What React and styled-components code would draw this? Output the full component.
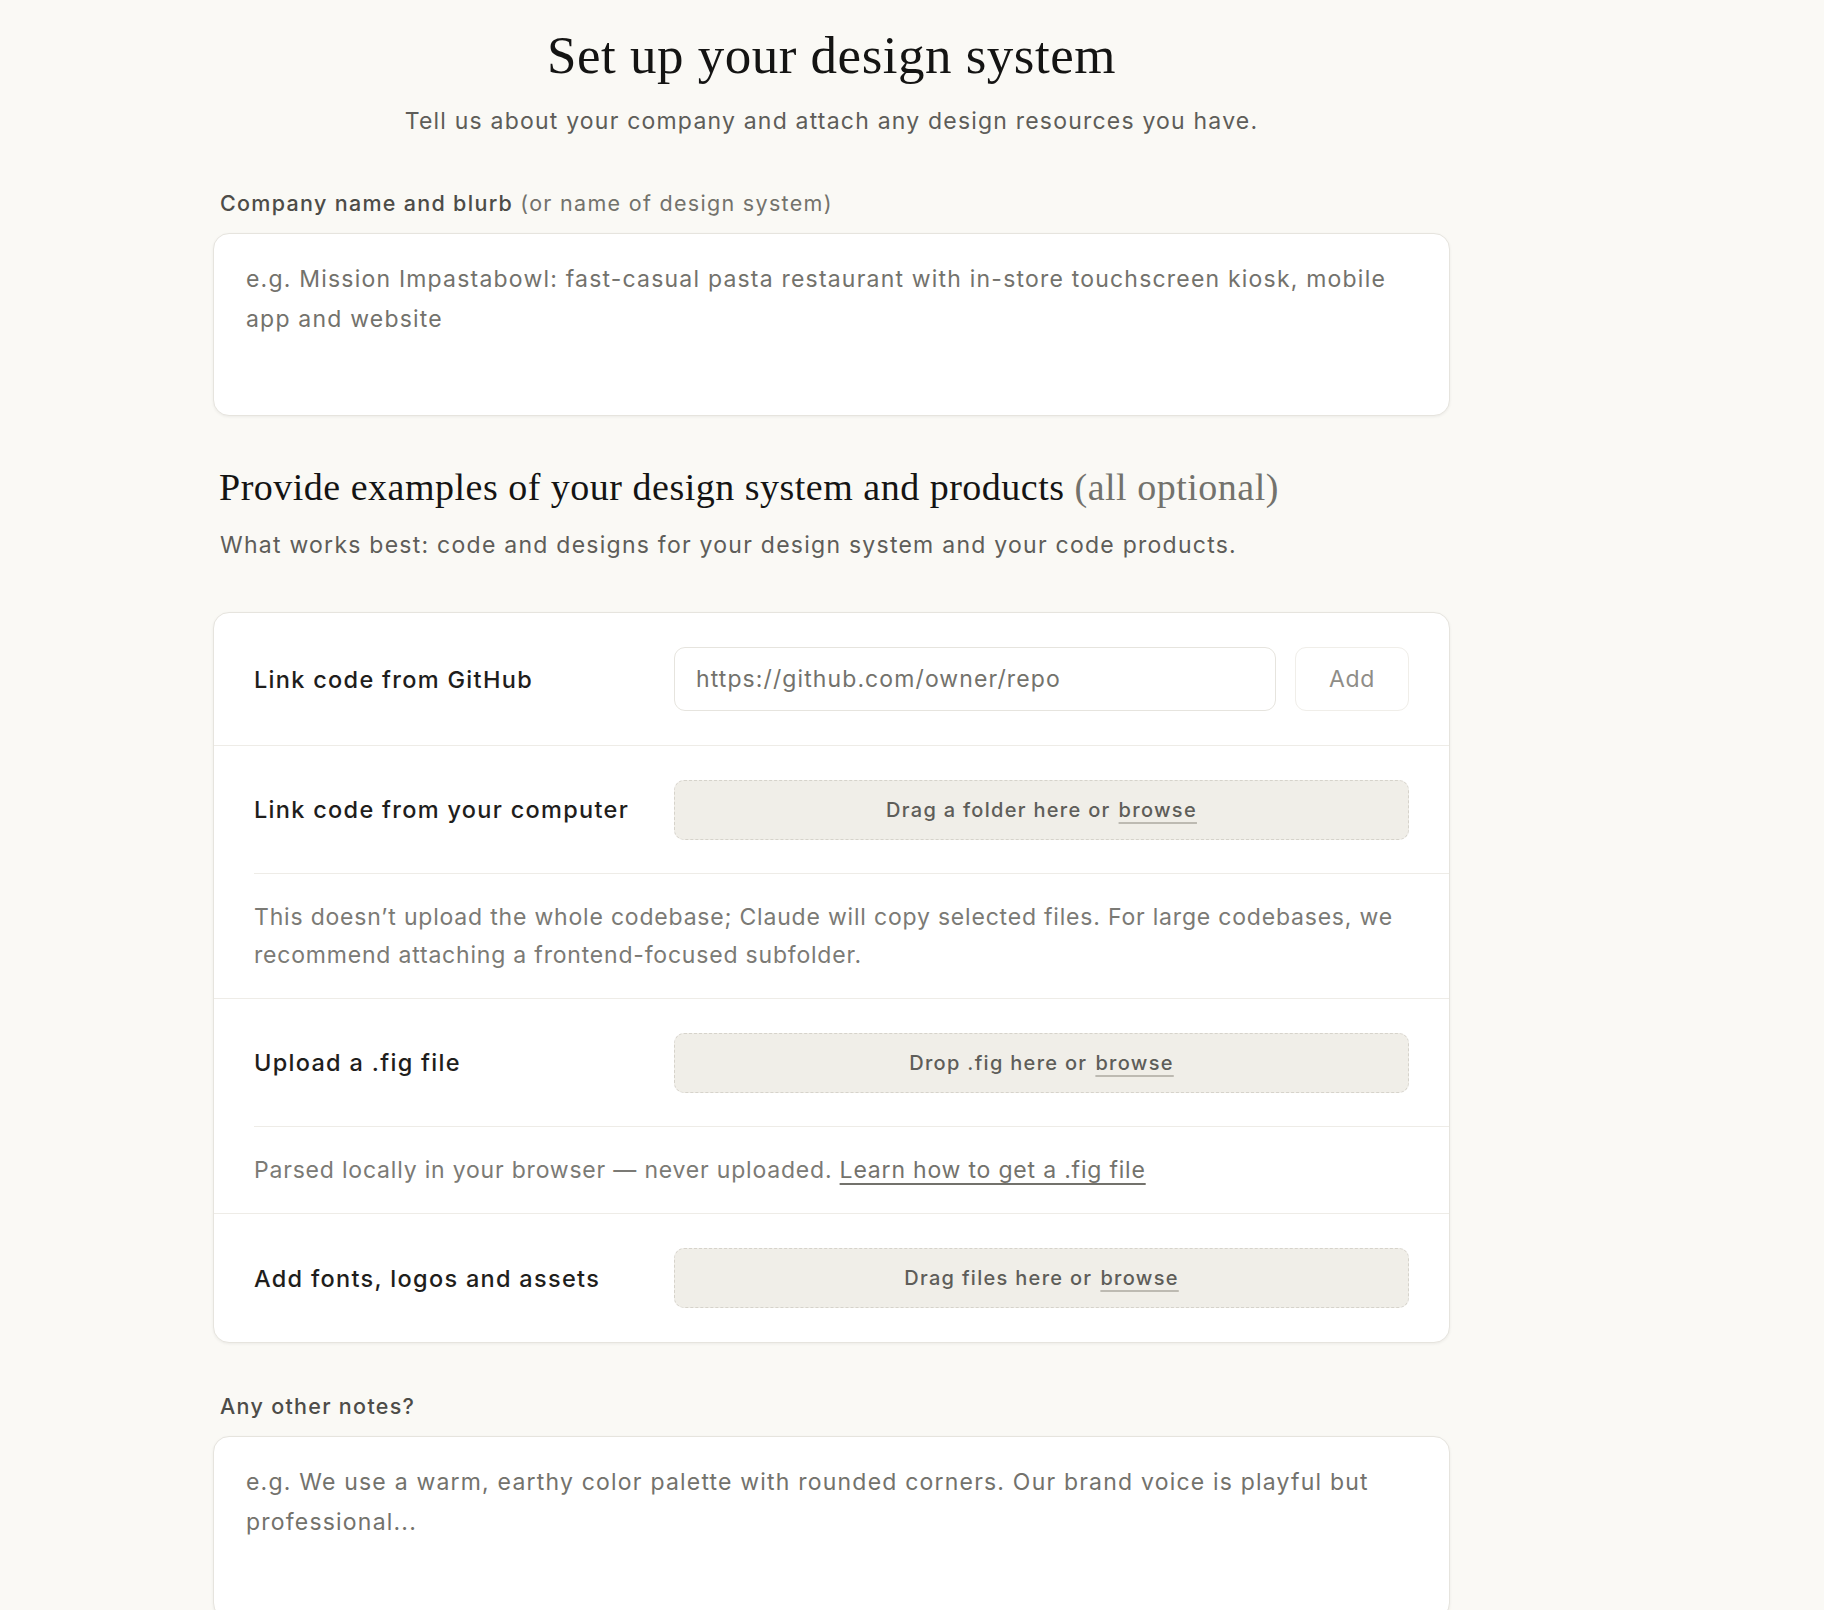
import React from "react";
import styled, { createGlobalStyle } from "styled-components";

const GlobalStyle = createGlobalStyle`
  body {
    margin: 0;
    background: #faf9f5;
    font-family: Inter, "Noto Sans", sans-serif;
    color: #141413;
  }
  * { box-sizing: border-box; }
`;

const Page = styled.div`
  padding: 0 0 40px 213px;
`;

const Column = styled.div`
  width: 1237px;
  display: flex;
  flex-direction: column;
`;

const Header = styled.header`
  text-align: center;
`;

const Title = styled.h1`
  margin: 23px 0 0;
  font-family: "Liberation Serif", serif;
  font-weight: 400;
  font-size: 53px;
  line-height: 64px;
  letter-spacing: 0.5px;
  color: #141413;
`;

const Lead = styled.p`
  margin: 18px 0 0;
  font-size: 23px;
  line-height: 32px;
  letter-spacing: 1.2px;
  color: #5e5d59;
`;

const FieldLabel = styled.label`
  display: block;
  padding-left: 7px;
  margin: ${(p) => p.$top}px 0 16px;
  font-size: 21.5px;
  line-height: 28px;
  letter-spacing: 1.3px;
  font-weight: 500;
  color: #4d4c48;

  span {
    font-weight: 400;
    color: #73726c;
  }
`;

const TextArea = styled.textarea`
  display: block;
  width: 100%;
  height: 183px;
  padding: 25px 32px;
  border: 1px solid #e6e4de;
  border-radius: 16px;
  background: #fff;
  box-shadow: 0 1px 3px rgba(20, 20, 19, 0.06);
  font-family: inherit;
  font-size: 23px;
  line-height: 40px;
  letter-spacing: 1.2px;
  color: #141413;
  resize: none;
  outline: none;

  &::placeholder {
    color: #73726c;
  }
`;

const SectionTitle = styled.h2`
  margin: 49px 0 0;
  padding-left: 6px;
  font-family: "Liberation Serif", serif;
  font-weight: 400;
  font-size: 38px;
  line-height: 44px;
  letter-spacing: 0.5px;
  color: #141413;

  span {
    color: #73726c;
  }
`;

const SectionHint = styled.p`
  margin: 20px 0 0;
  padding-left: 7px;
  font-size: 23px;
  line-height: 32px;
  letter-spacing: 1.25px;
  color: #5e5d59;
`;

const Card = styled.div`
  margin-top: 51px;
  background: #fff;
  border: 1px solid #e6e4de;
  border-radius: 16px;
  box-shadow: 0 1px 3px rgba(20, 20, 19, 0.06);
  overflow: hidden;
`;

const Group = styled.div`
  & + & {
    border-top: 1.5px solid #eeece7;
  }
`;

const Row = styled.div`
  display: grid;
  grid-template-columns: 420px 1fr;
  align-items: center;
  padding: ${(p) => p.$pad}px 40px;
`;

const RowLabel = styled.div`
  font-size: 23.5px;
  font-weight: 500;
  letter-spacing: 1.3px;
  color: #1f1e1c;
`;

const InputLine = styled.div`
  display: flex;
  gap: 19px;
`;

const UrlInput = styled.input`
  flex: 1;
  height: 64px;
  padding: 0 21px;
  border: 1.5px solid #e6e4de;
  border-radius: 11px;
  background: #fff;
  font-family: inherit;
  font-size: 23px;
  letter-spacing: 1.1px;
  color: #141413;
  outline: none;

  &::placeholder {
    color: #73726c;
  }
`;

const AddButton = styled.button`
  width: 114px;
  height: 64px;
  border: 1.5px solid #f0eee9;
  border-radius: 11px;
  background: #fff;
  font-family: inherit;
  font-size: 23px;
  letter-spacing: 0.6px;
  color: #8f8d87;
  cursor: pointer;
`;

const DropZone = styled.div`
  height: 60px;
  display: flex;
  align-items: center;
  justify-content: center;
  gap: 8px;
  border: 1.5px dashed #d6d3cb;
  border-radius: 10px;
  background: #f0eee8;
  font-size: 20px;
  font-weight: 500;
  letter-spacing: 1.3px;
  color: #5e5d59;
`;

const Browse = styled.a`
  color: #5e5d59;
  text-decoration: underline;
  text-decoration-color: #bdbab2;
  text-decoration-thickness: 2px;
  text-underline-offset: 5px;
  cursor: pointer;
`;

const Help = styled.p`
  margin: 0 0 0 40px;
  padding: 24px 40px 24px 0;
  border-top: 1.5px solid #eeece7;
  font-size: 23px;
  line-height: 38px;
  letter-spacing: 0.8px;
  color: #7b7a75;
`;

const HelpLink = styled.a`
  color: #73726c;
  text-decoration: underline;
  text-decoration-thickness: 2px;
  text-underline-offset: 5px;
  cursor: pointer;
`;

function Drop({ children }) {
  return (
    <DropZone>
      {children}
      <Browse>browse</Browse>
    </DropZone>
  );
}

export default function App() {
  return (
    <>
      <GlobalStyle />
      <Page>
        <Column>
          <Header>
            <Title>Set up your design system</Title>
            <Lead>
              Tell us about your company and attach any design resources you
              have.
            </Lead>
          </Header>

          <FieldLabel $top={52}>
            Company name and blurb <span>(or name of design system)</span>
          </FieldLabel>
          <TextArea placeholder="e.g. Mission Impastabowl: fast-casual pasta restaurant with in-store touchscreen kiosk, mobile app and website" />

          <SectionTitle>
            Provide examples of your design system and products{" "}
            <span>(all optional)</span>
          </SectionTitle>
          <SectionHint>
            What works best: code and designs for your design system and your
            code products.
          </SectionHint>

          <Card>
            <Group>
              <Row $pad={34}>
                <RowLabel>Link code from GitHub</RowLabel>
                <InputLine>
                  <UrlInput placeholder="https://github.com/owner/repo" />
                  <AddButton>Add</AddButton>
                </InputLine>
              </Row>
            </Group>

            <Group>
              <Row $pad={33.5}>
                <RowLabel>Link code from your computer</RowLabel>
                <Drop>Drag a folder here or</Drop>
              </Row>
              <Help>
                This doesn’t upload the whole codebase; Claude will copy
                selected files. For large codebases, we recommend attaching a
                frontend-focused subfolder.
              </Help>
            </Group>

            <Group>
              <Row $pad={33.5}>
                <RowLabel>Upload a .fig file</RowLabel>
                <Drop>Drop .fig here or</Drop>
              </Row>
              <Help>
                Parsed locally in your browser — never uploaded.{" "}
                <HelpLink>Learn how to get a .fig file</HelpLink>
              </Help>
            </Group>

            <Group>
              <Row $pad={34}>
                <RowLabel>Add fonts, logos and assets</RowLabel>
                <Drop>Drag files here or</Drop>
              </Row>
            </Group>
          </Card>

          <FieldLabel $top={49}>Any other notes?</FieldLabel>
          <TextArea placeholder="e.g. We use a warm, earthy color palette with rounded corners. Our brand voice is playful but professional..." />
        </Column>
      </Page>
    </>
  );
}
